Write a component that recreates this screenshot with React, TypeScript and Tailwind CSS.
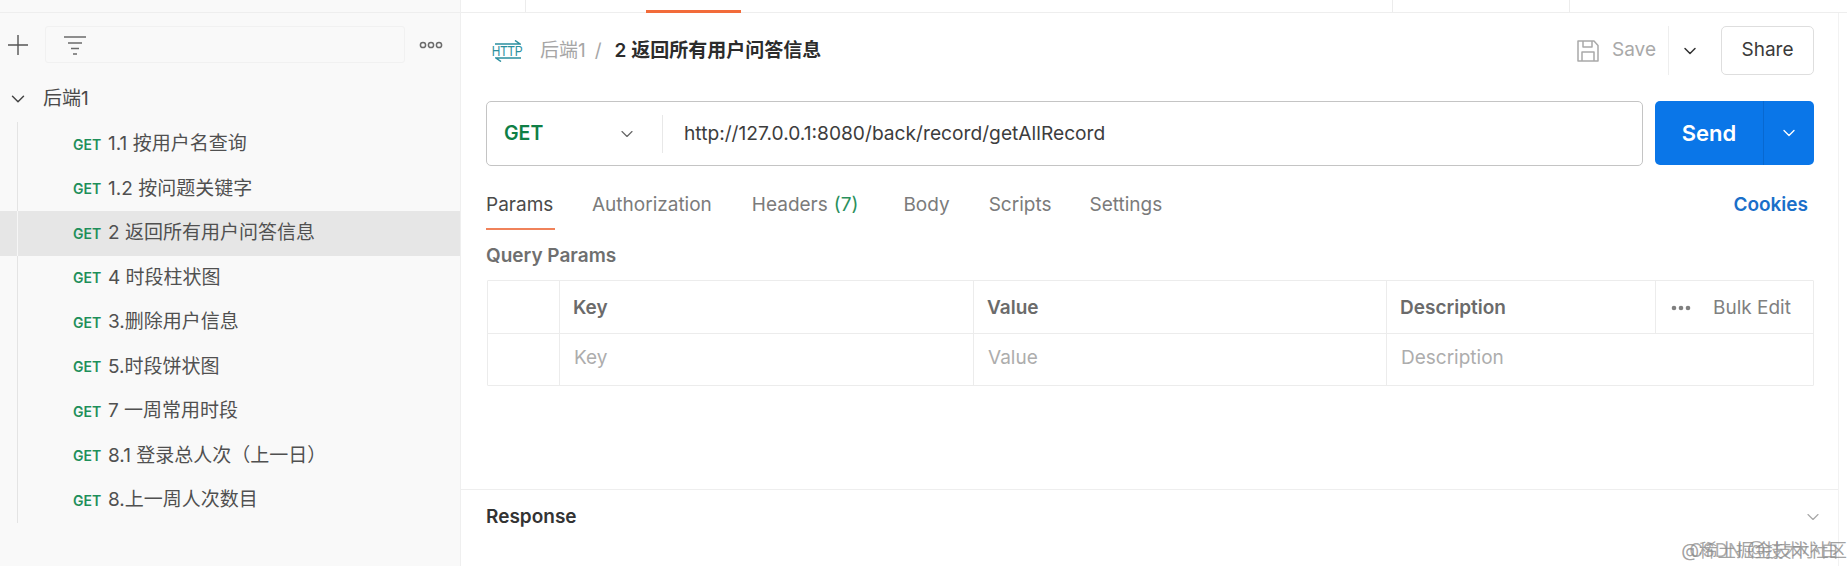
import { ChevronDown } from "lucide-react";

const FONT = "font-['Inter','Noto_Sans_CJK_SC',sans-serif]";

const requests = [
  "1.1 按用户名查询",
  "1.2 按问题关键字",
  "2 返回所有用户问答信息",
  "4 时段柱状图",
  "3.删除用户信息",
  "5.时段饼状图",
  "7 一周常用时段",
  "8.1 登录总人次（上一日）",
  "8.上一周人次数目",
];

function Sidebar() {
  return (
    <aside className="w-[461px] shrink-0 bg-[#f9f9f9] border-r border-[#efefef] flex flex-col">
      <div className="h-[13px] border-b border-[#eeeeee]" />
      <div className="h-[49px] mt-[7px] flex items-center pl-[8px]">
        <svg width="20" height="20" viewBox="0 0 20 20" fill="none" stroke="#555" strokeWidth="1.4">
          <path d="M10 0v20M0 10h20" />
        </svg>
        <div className="ml-[17px] w-[360px] h-[37px] border border-[#f1f1f1] rounded-[3px] flex items-center pl-[17px]">
          <svg width="24" height="20" viewBox="0 0 24 20" fill="none" stroke="#6b6b6b" strokeWidth="1.3">
            <path d="M1 2h22M5 8h14M8 13.5h8M10 19h4" />
          </svg>
        </div>
        <svg className="ml-[14px]" width="24" height="8" viewBox="0 0 24 8" fill="none" stroke="#6b6b6b" strokeWidth="1.5">
          <circle cx="4" cy="4" r="2.6" />
          <circle cx="12" cy="4" r="2.6" />
          <circle cx="20" cy="4" r="2.6" />
        </svg>
      </div>
      <div className="h-[46px] mt-[7px] flex items-center pl-[7px] text-[#4a4a4a] text-[19px]">
        <ChevronDown className="w-[22px] h-[22px] text-[#444]" strokeWidth={1.6} />
        <span className="ml-[14px]">后端1</span>
      </div>
      <div className="h-[400px]">
        {requests.map((name, i) => (
          <div key={name} className={`h-[44.5px] flex items-center pl-[17px] ${i === 2 ? "bg-[#e6e6e6]" : ""}`}>
            <div className={`w-px h-full ${i === 2 ? "bg-[#f6f6f6]" : "bg-[#e4e4e4]"}`} />
            <span className="ml-[55px] w-[35px] text-[14px] font-semibold text-[#1f8f5a]">GET</span>
            <span className="text-[19px] text-[#505050] whitespace-nowrap">{name}</span>
          </div>
        ))}
      </div>
    </aside>
  );
}

function TopStrip() {
  return (
    <div className="h-[13px] border-b border-[#eeeeee] flex shrink-0">
      <div className="w-[65px] border-r border-[#ececec]" />
      <div className="w-[120px]" />
      <div className="w-[95px] border-b-[3px] border-[#f26b3a] h-[13px]" />
      <div className="w-[652px] border-r border-[#ececec]" />
      <div className="w-[177px] border-r border-[#ececec]" />
    </div>
  );
}

function HttpIcon() {
  return (
    <div className="w-[27px] h-[26px] flex flex-col items-center justify-center text-[#2b8f9e]">
      <svg width="26" height="5" viewBox="0 0 26 5" fill="none" stroke="currentColor" strokeWidth="1.5">
        <path d="M0 4h25L20 0.5" />
      </svg>
      <span className="h-[12px] text-[14px] leading-[12px] font-medium font-['Liberation_Sans'] scale-x-[0.85]">HTTP</span>
      <svg width="26" height="5" viewBox="0 0 26 5" fill="none" stroke="currentColor" strokeWidth="1.5">
        <path d="M26 1H1L6 4.5" />
      </svg>
    </div>
  );
}

function RequestHeader() {
  return (
    <div className="h-[49px] mt-[13px] flex items-center pl-[33px] pr-[33px] text-[19px]">
      <HttpIcon />
      <div className="flex items-center pt-[2px]">
        <span className="ml-[19px] text-[#a6a6a6]">后端1</span>
        <span className="ml-[9px] text-[#a6a6a6]">/</span>
        <span className="ml-[13px] font-semibold text-[#2c2c2c]">2 返回所有用户问答信息</span>
      </div>
      <div className="ml-auto flex items-center h-full">
        <svg width="24" height="24" viewBox="0 0 24 24" fill="none" stroke="#a9a9a9" strokeWidth="1.5" strokeLinejoin="round">
          <path d="M2 2h16l4 4.5V22H2z" />
          <path d="M7 2v6h9V2M6 22v-9h12v9" />
        </svg>
        <span className="ml-[12px] text-[#a9a9a9]">Save</span>
        <div className="ml-[12px] h-full border-l border-[#eeeeee]" />
        <ChevronDown className="ml-[11px] w-[20px] h-[20px] text-[#333]" strokeWidth={1.8} />
        <div className="ml-[21px] w-[93px] h-[49px] border border-[#dedede] rounded-[5px] flex items-center justify-center text-[#3a3a3a]">
          Share
        </div>
      </div>
    </div>
  );
}

function UrlBar() {
  return (
    <div className="mt-[26px] flex pl-[25px] pr-[33px] text-[19px]">
      <div className="flex-1 h-[65px] border border-[#c4c4c4] rounded-[5px] flex items-center">
        <span className="ml-[17px] w-[113px] text-[19.5px] font-semibold text-[#0f7f46]">GET</span>
        <ChevronDown className="w-[20px] h-[20px] text-[#666]" strokeWidth={1.4} />
        <div className="ml-[25px] h-[38px] border-l border-[#e8e8e8]" />
        <span className="ml-[21px] text-[19.2px] text-[#3d3d3d]">http://127.0.0.1:8080/back/record/getAllRecord</span>
      </div>
      <div className="ml-[12px] w-[159px] h-[64px] bg-[#0a76e8] rounded-[5px] flex items-center text-white">
        <span className="w-[108px] text-center text-[22px] font-semibold">Send</span>
        <div className="h-full border-l border-[#0868d0]" />
        <div className="flex-1 flex justify-center">
          <ChevronDown className="w-[20px] h-[20px]" strokeWidth={1.6} />
        </div>
      </div>
    </div>
  );
}

function Tabs() {
  const tabs = [
    { label: "Authorization", left: "ml-[37px]" },
    { label: "Headers", left: "ml-[40px]" },
    { label: "Body", left: "ml-[45px]" },
    { label: "Scripts", left: "ml-[39px]" },
    { label: "Settings", left: "ml-[38px]" },
  ];
  return (
    <div className="mt-[20px] h-[44px] flex pl-[25px] pr-[39px] text-[19px] text-[#7b7b7b]">
      <div className="h-[44px] w-[69px] border-b-2 border-[#f0825a] text-[#4a4a4a] pt-[5px]">Params</div>
      {tabs.map((t) => (
        <div key={t.label} className={`${t.left} pt-[5px] whitespace-nowrap`}>
          {t.label}
          {t.label === "Headers" && <span className="ml-[6px] text-[#2a8f5c]">(7)</span>}
        </div>
      ))}
      <div className="ml-auto pt-[5px] font-semibold text-[#1a6fc9]">Cookies</div>
    </div>
  );
}

function ParamsTable() {
  const head = "border-r border-[#ececec] flex items-center pl-[13px] pt-[2px]";
  const cell = "border-r border-[#ececec] flex items-center pl-[14px] pb-[2px]";
  return (
    <div className="mt-[14px] ml-[26px] mr-[33px] border border-[#ececec] rounded-[1px] text-[19px]">
      <div className="h-[53px] flex border-b border-[#ececec] font-semibold text-[#6b6b6b]">
        <div className="w-[72px] border-r border-[#ececec]" />
        <div className={`w-[414px] ${head}`}>Key</div>
        <div className={`w-[413px] ${head}`}>Value</div>
        <div className={`w-[269px] ${head}`}>Description</div>
        <div className="flex-1 flex items-center pl-[15px] pt-[2px] font-normal text-[#808080]">
          <svg width="20" height="6" viewBox="0 0 20 6" fill="currentColor">
            <circle cx="3" cy="3" r="2.3" />
            <circle cx="10" cy="3" r="2.3" />
            <circle cx="17" cy="3" r="2.3" />
          </svg>
          <span className="ml-[22px]">Bulk Edit</span>
        </div>
      </div>
      <div className="h-[51px] flex text-[#adadad]">
        <div className="w-[72px] border-r border-[#ececec]" />
        <div className={`w-[414px] ${cell}`}>Key</div>
        <div className={`w-[413px] ${cell}`}>Value</div>
        <div className="flex-1 flex items-center pl-[14px] pb-[2px]">Description</div>
      </div>
    </div>
  );
}

export default function App() {
  return (
    <div className={`relative w-[1847px] h-[566px] overflow-hidden bg-white flex ${FONT}`}>
      <Sidebar />
      <main className="flex-1 flex flex-col">
        <TopStrip />
        <RequestHeader />
        <UrlBar />
        <Tabs />
        <div className="mt-[15px] pl-[25px] text-[19px] font-semibold text-[#6f6f6f] h-[21px] leading-[21px]">Query Params</div>
        <ParamsTable />
        <div className="mt-[103px] border-t border-[#eeeeee] h-[55px] flex items-center pl-[25px] pr-[24px]">
          <span className="text-[19px] font-semibold text-[#333]">Response</span>
          <ChevronDown className="ml-auto w-[20px] h-[20px] text-[#a8a8a8]" strokeWidth={1.4} />
        </div>
      </main>
      <div className="absolute right-0 top-[13px] bottom-0 w-[9px] bg-white border-l border-[#f2f2f2]" />
      <div className="absolute right-0 top-[539px] text-[18.5px] leading-[22px] text-[#8a8a8a]/80 whitespace-nowrap">@稀土掘金技术社区</div>
      <div className="absolute right-[8px] top-[539px] text-[18.5px] leading-[22px] text-[#8a8a8a]/70 whitespace-nowrap">CSDN @技术小白</div>
    </div>
  );
}
